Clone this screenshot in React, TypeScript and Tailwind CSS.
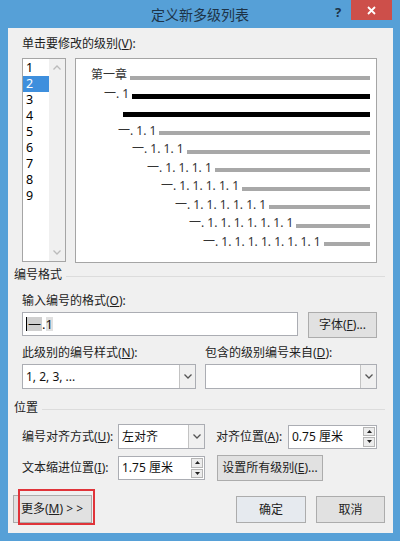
import type { ReactNode } from "react";

const font = "font-['Noto_Sans','Noto_Sans_CJK_SC',sans-serif]";

const previewRows = [
  { indent: "pl-[15px]", label: "第一章", bar: "h-[4px] bg-[#a8a8a8]" },
  { indent: "pl-[28px]", label: "一. 1", bar: "h-[5px] bg-black" },
  { indent: "pl-[47px]", label: "", bar: "h-[5px] bg-black" },
  { indent: "pl-[42px]", label: "一. 1. 1", bar: "h-[4px] bg-[#a8a8a8]" },
  { indent: "pl-[56px]", label: "一. 1. 1. 1", bar: "h-[4px] bg-[#a8a8a8]" },
  { indent: "pl-[71px]", label: "一. 1. 1. 1. 1", bar: "h-[4px] bg-[#a8a8a8]" },
  { indent: "pl-[85px]", label: "一. 1. 1. 1. 1. 1", bar: "h-[4px] bg-[#a8a8a8]" },
  { indent: "pl-[99px]", label: "一. 1. 1. 1. 1. 1. 1", bar: "h-[4px] bg-[#a8a8a8]" },
  { indent: "pl-[113px]", label: "一. 1. 1. 1. 1. 1. 1. 1", bar: "h-[4px] bg-[#a8a8a8]" },
  { indent: "pl-[127px]", label: "一. 1. 1. 1. 1. 1. 1. 1. 1", bar: "h-[4px] bg-[#a8a8a8]" },
];

function Chevron({ up = false, color = "#555" }: { up?: boolean; color?: string }) {
  return (
    <svg width="8" height="5" viewBox="0 0 8 5">
      <polyline
        points={up ? "0.5,4.5 4,1 7.5,4.5" : "0.5,0.5 4,4 7.5,0.5"}
        fill="none"
        stroke={color}
        strokeWidth="1.3"
      />
    </svg>
  );
}

function Tri({ up = false }: { up?: boolean }) {
  return (
    <svg width="5" height="3" viewBox="0 0 5 3">
      <polygon points={up ? "0,3 2.5,0 5,3" : "0,0 5,0 2.5,3"} fill="#222" />
    </svg>
  );
}

function Btn({ children, className = "" }: { children: ReactNode; className?: string }) {
  return (
    <div
      className={`flex items-center justify-center border border-[#acacac] bg-[#e1e1e1] text-[12px] text-[#222] ${className}`}
    >
      {children}
    </div>
  );
}

function Select({ value = "", className = "" }: { value?: string; className?: string }) {
  return (
    <div className={`flex h-[25px] border border-[#abadb3] bg-white ${className}`}>
      <div className="flex flex-1 items-center pl-[3px] text-[12px] text-[#111]">{value}</div>
      <div className="flex w-[16px] items-center justify-center border-l border-[#c3c3c3] bg-[#f0f0f0]">
        <Chevron />
      </div>
    </div>
  );
}

function Spinner({ value, className = "" }: { value: string; className?: string }) {
  return (
    <div className={`flex h-[24px] border border-[#abadb3] bg-white ${className}`}>
      <div className="flex flex-1 items-center pl-[3px] text-[12px] text-[#111]">{value}</div>
      <div className="flex w-[13px] flex-col gap-[1px] py-[1px] pr-[1px]">
        <div className="flex flex-1 items-center justify-center border border-[#b5b5b5] bg-[#ececec]">
          <Tri up />
        </div>
        <div className="flex flex-1 items-center justify-center border border-[#b5b5b5] bg-[#ececec]">
          <Tri />
        </div>
      </div>
    </div>
  );
}

function SectionHeader({ title }: { title: string }) {
  return (
    <div className="-ml-[8px] -mr-[8px] flex h-[16px] items-center gap-[4px] text-[12px] text-[#222]">
      <span>{title}</span>
      <div className="mt-[2px] h-px flex-1 bg-[#dcdcdc]" />
    </div>
  );
}

export default function App() {
  return (
    <div className={`flex h-[541px] w-[400px] flex-col bg-[#56a0d7] pb-[8px] pl-[8px] pr-[7px] ${font}`}>
      {/* title bar */}
      <div className="-ml-[8px] -mr-[7px] grid h-[28px] grid-cols-[1fr_auto_1fr]">
        <div />
        <div className="flex items-center text-[14px] text-[#1d3347]">定义新多级列表</div>
        <div className="flex items-start justify-end pr-[8px]">
          <span className="mr-[6px] mt-[3px] w-[14px] text-center text-[13px] font-bold text-[#1d3347]">?</span>
          <div className="flex h-[20px] w-[41px] items-center justify-center bg-[#cd4f4a]">
            <svg width="9" height="9" viewBox="0 0 9 9">
              <path d="M1 1L8 8M8 1L1 8" stroke="white" strokeWidth="1.8" />
            </svg>
          </div>
        </div>
      </div>

      <div className="flex flex-1 flex-col bg-[#f0f0f0] pl-[14px] pr-[16px] text-[12px] text-[#222]">
        <div className="mt-[8px] flex h-[16px] items-center">
          单击要修改的级别(<u>V</u>):
        </div>

        <div className="mt-[6px] flex gap-[9px]">
          {/* level list */}
          <div className="flex h-[204px] w-[44px] border border-[#a5a5a5] bg-white">
            <div className="flex w-[26px] flex-col pt-[1px] text-[12.5px] text-black">
              {["1", "2", "3", "4", "5", "6", "7", "8", "9"].map((n) => (
                <div
                  key={n}
                  className={`flex h-[16px] items-center pl-[3px] ${n === "2" ? "bg-[#3e8fdd] text-white" : ""}`}
                >
                  {n}
                </div>
              ))}
            </div>
            <div className="flex flex-1 flex-col items-center justify-between bg-[#f0f0f0] py-[6px]">
              <Chevron up color="#bbb" />
              <Chevron color="#bbb" />
            </div>
          </div>

          {/* preview */}
          <div className="flex h-[205px] flex-1 flex-col border border-[#a5a5a5] bg-white pr-[6px] pt-[7px]">
            {previewRows.map((r, i) => (
              <div key={i} className={`flex h-[18.5px] items-center ${r.indent}`}>
                {r.label && <span className="mr-[3px] text-[12px] text-[#333]">{r.label}</span>}
                <div className={`mt-[5px] flex-1 ${r.bar}`} />
              </div>
            ))}
          </div>
        </div>

        <div className="mt-[4px]">
          <SectionHeader title="编号格式" />
        </div>

        <div className="mt-[10px] flex h-[16px] items-center">
          输入编号的格式(<u>O</u>):
        </div>
        <div className="mt-[3px] flex items-start">
          <div className="flex h-[24px] w-[276px] items-center border border-[#abadb3] bg-white pl-[3px] text-[13px] text-[#111]">
            <div className="h-[14px] w-px bg-black" />
            <span className="bg-[#cfcfcf] px-[1px] leading-[14px]">一</span>
            <span className="leading-[14px]">.</span>
            <span className="bg-[#e0e0e0] leading-[14px]">1</span>
          </div>
          <Btn className="ml-[10px] h-[26px] w-[69px]">
            字体(<u>F</u>)...
          </Btn>
        </div>

        <div className="mt-[7px] flex h-[16px] items-center">
          <div className="w-[183px]">
            此级别的编号样式(<u>N</u>):
          </div>
          <div>
            包含的级别编号来自(<u>D</u>):
          </div>
        </div>
        <div className="mt-[3px] flex gap-[9px]">
          <Select value="1, 2, 3, ..." className="w-[174px]" />
          <Select className="flex-1" />
        </div>

        <div className="mt-[11px]">
          <SectionHeader title="位置" />
        </div>

        <div className="mt-[8px] flex items-center">
          <div className="w-[96px]">
            编号对齐方式(<u>U</u>):
          </div>
          <Select value="左对齐" className="w-[87px]" />
          <div className="ml-[11px] w-[72px]">
            对齐位置(<u>A</u>):
          </div>
          <Spinner value="0.75 厘米" className="flex-1" />
        </div>

        <div className="mt-[6px] flex items-center">
          <div className="w-[96px]">
            文本缩进位置(<u>I</u>):
          </div>
          <Spinner value="1.75 厘米" className="w-[87px]" />
          <Btn className="ml-[12px] h-[26px] w-[106px]">
            设置所有级别(<u>E</u>)...
          </Btn>
        </div>

        <div className="-ml-[9px] -mr-[8px] mt-[14px] flex items-start">
          <div className="relative">
            <Btn className="h-[28px] w-[79px] justify-start pl-[7px]">
              更多(<u>M</u>)&nbsp;&gt;&nbsp;&gt;
            </Btn>
            <div className="absolute left-[5px] top-[-6px] h-[36px] w-[77px] border-2 border-[#e0343a]" />
          </div>
          <Btn className="ml-auto mt-[1px] h-[27px] w-[70px] border-[#3d7fc4] bg-[#e6eaef]">确定</Btn>
          <Btn className="ml-[10px] mt-[1px] h-[27px] w-[69px]">取消</Btn>
        </div>
      </div>
    </div>
  );
}
